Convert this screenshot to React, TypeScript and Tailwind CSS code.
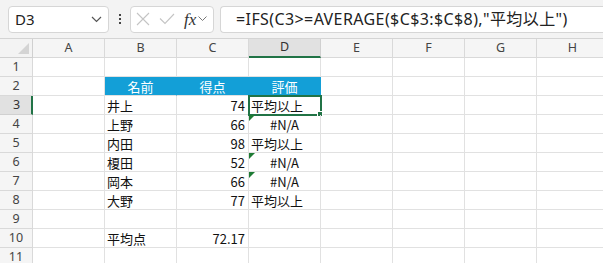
import React from 'react';

const cols = ['A', 'B', 'C', 'D', 'E', 'F', 'G', 'H'];

type Row = {
  b?: string;
  c?: string;
  d?: string;
  err?: boolean;
  head?: boolean;
};

const rows: Row[] = [
  {},
  { b: '名前', c: '得点', d: '評価', head: true },
  { b: '井上', c: '74', d: '平均以上' },
  { b: '上野', c: '66', d: '#N/A', err: true },
  { b: '内田', c: '98', d: '平均以上' },
  { b: '榎田', c: '52', d: '#N/A', err: true },
  { b: '岡本', c: '66', d: '#N/A', err: true },
  { b: '大野', c: '77', d: '平均以上' },
  {},
  { b: '平均点', c: '72.17' },
  {},
];

const uiFont = "font-['Noto_Sans','Noto_Sans_CJK_JP',sans-serif]";
const cellFont = "font-['Noto_Sans_CJK_JP',sans-serif]";

function FormulaBar() {
  return (
    <div className={`flex h-[39px] items-center gap-0 border-b border-[#d4d4d4] bg-[#f3f3f3] pl-[8px] ${uiFont}`}>
      <div className="flex h-[27px] w-[101px] shrink-0 items-center justify-between rounded-[4px] border border-[#d6d6d6] bg-white pl-[6px] pr-[6px]">
        <span className="text-[15px] leading-none text-[#222]">D3</span>
        <svg width="11" height="7" viewBox="0 0 11 7" fill="none">
          <path d="M1 1l4.5 4.5L10 1" stroke="#555" strokeWidth="1.2" />
        </svg>
      </div>
      <div className="flex w-[21px] shrink-0 flex-col items-center gap-[2px]">
        <span className="h-[2px] w-[2px] bg-[#444]" />
        <span className="h-[2px] w-[2px] bg-[#444]" />
        <span className="h-[2px] w-[2px] bg-[#444]" />
      </div>
      <div className="flex h-[27px] w-[84px] shrink-0 items-center rounded-[4px] border border-[#d6d6d6] bg-white pl-[4px]">
        <svg width="14" height="14" viewBox="0 0 14 14" className="ml-[1px]">
          <path d="M1 1l12 12M13 1L1 13" stroke="#c4c4c4" strokeWidth="1.1" />
        </svg>
        <svg width="16" height="12" viewBox="0 0 16 12" className="ml-[9px]">
          <path d="M1 5.5l5 5L15 1" stroke="#c4c4c4" strokeWidth="1.1" fill="none" />
        </svg>
        <span className="ml-[9px] font-['Liberation_Serif',serif] text-[17px] italic leading-none text-[#333]">
          fx
        </span>
        <svg width="9" height="6" viewBox="0 0 9 6" fill="none" className="ml-[2px]">
          <path d="M0.5 0.5l4 4 4-4" stroke="#777" strokeWidth="1" />
        </svg>
      </div>
      <div className="ml-[6px] flex h-[27px] flex-1 items-center rounded-l-[4px] border border-r-0 border-[#d6d6d6] bg-white pl-[15px]">
        <span className="whitespace-nowrap text-[16px] leading-none tracking-[0.4px] text-[#222]">
          =IFS(C3&gt;=AVERAGE($C$3:$C$8),"平均以上")
        </span>
      </div>
    </div>
  );
}

function ColHeaders() {
  return (
    <div className={`flex h-[19px] ${uiFont}`}>
      <div className="relative h-[19px] w-[33px] shrink-0 border-r border-b border-[#d0d0d0] bg-[#f3f3f3]">
        <div className="absolute bottom-[3px] right-[3px] h-0 w-0 border-b-[11px] border-l-[11px] border-b-[#d4d4d4] border-l-transparent" />
      </div>
      {cols.map((c) =>
        c === 'D' ? (
          <div
            key={c}
            className="flex h-[19px] w-[72px] shrink-0 items-center justify-center border-r border-b-2 border-r-[#d0d0d0] border-b-[#217346] bg-[#e1e1e1] text-[12.5px] text-[#333]"
          >
            {c}
          </div>
        ) : (
          <div
            key={c}
            className="flex h-[19px] w-[72px] shrink-0 items-center justify-center border-r border-b border-[#d9d9d9] bg-[#f5f5f5] text-[12.5px] text-[#444]"
          >
            {c}
          </div>
        )
      )}
    </div>
  );
}

function GridRow({ n, r }: { n: number; r: Row }) {
  const sel = n === 3;
  const blank = 'h-[19px] w-[72px] shrink-0 border-r border-b border-[#e1e1e1]';
  const headCell =
    'flex h-[19px] w-[72px] shrink-0 items-center justify-center border-r border-b border-r-[#139fd7] border-b-[#e1e1e1] bg-[#139fd7] text-white';
  return (
    <div className={`flex h-[19px] text-[13px] leading-none text-[#111] ${cellFont}`}>
      <div
        className={
          sel
            ? `flex h-[19px] w-[33px] shrink-0 items-center justify-center border-r-2 border-b border-r-[#217346] border-b-[#d0d0d0] bg-[#e1e1e1] pl-[2px] text-[12.5px] text-[#333] ${uiFont}`
            : `flex h-[19px] w-[33px] shrink-0 items-center justify-center border-r border-b border-[#d9d9d9] bg-[#f5f5f5] text-[12.5px] text-[#444] ${uiFont}`
        }
      >
        {n}
      </div>
      <div className={blank} />
      {r.head ? (
        <>
          <div className={headCell}>{r.b}</div>
          <div className={headCell}>{r.c}</div>
          <div className={headCell}>{r.d}</div>
        </>
      ) : (
        <>
          <div className={`${blank} flex items-center pl-[2px]`}>{r.b}</div>
          <div className={`${blank} flex items-center justify-end pr-[3px]`}>{r.c}</div>
          <div
            className={`${blank} relative flex items-center ${
              r.d === '#N/A' ? 'justify-center' : 'pl-[2px]'
            }`}
          >
            {r.err && (
              <div className="absolute left-0 top-0 h-0 w-0 border-t-[6px] border-r-[6px] border-t-[#1e7b34] border-r-transparent" />
            )}
            {r.d}
            {sel && (
              <div className="absolute -left-[1px] -top-[1px] -right-[2px] -bottom-[2px] border-2 border-[#217346]">
                <div className="absolute -bottom-[3px] -right-[3px] h-[6px] w-[6px] border border-white bg-[#217346]" />
              </div>
            )}
          </div>
        </>
      )}
      <div className={blank} />
      <div className={blank} />
      <div className={blank} />
      <div className={blank} />
    </div>
  );
}

export default function App() {
  return (
    <div className="h-[263px] w-[603px] overflow-hidden bg-white">
      <FormulaBar />
      <ColHeaders />
      {rows.map((r, i) => (
        <GridRow key={i} n={i + 1} r={r} />
      ))}
    </div>
  );
}
